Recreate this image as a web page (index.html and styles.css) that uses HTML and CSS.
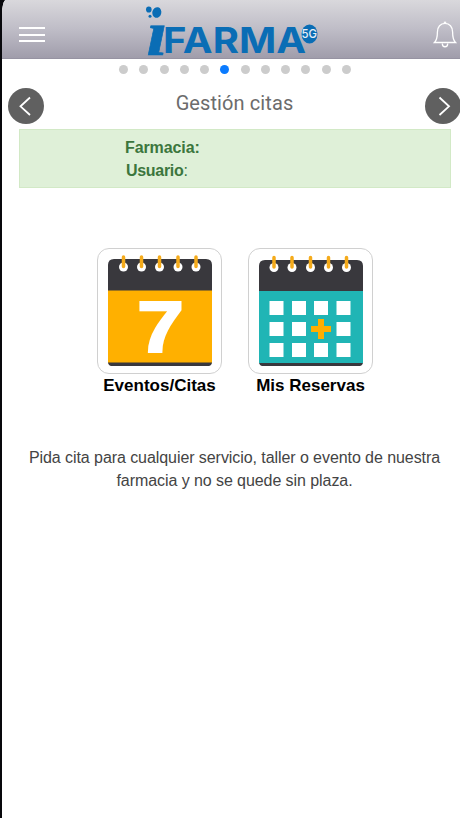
FILE: index.html
```html
<!DOCTYPE html>
<html lang="es">
<head>
    <meta charset="UTF-8">
    <meta name="viewport" content="width=device-width, initial-scale=1.0">
    <title>iFarma - Gestión citas</title>
    <link rel="stylesheet" href="styles.css">
</head>
<body>
    <div class="app">
        <header class="header">
            <button class="menu-btn" aria-label="Menú">
                <span></span>
                <span></span>
                <span></span>
            </button>
            <svg class="logo" width="174" height="59" viewBox="0 0 174 59" role="img" aria-label="iFarma 5G">
                <ellipse cx="2.8" cy="9.5" rx="2.8" ry="3.1"/>
                <ellipse cx="10.8" cy="12.5" rx="4.5" ry="5.4" transform="rotate(15 10.8 12.5)"/>
                <circle cx="4" cy="16.3" r="1.5"/>
                <text class="logo-i" x="0.5" y="55" textLength="21" lengthAdjust="spacingAndGlyphs">ı</text>
                <text class="logo-name" x="17" y="53" textLength="143" lengthAdjust="spacingAndGlyphs">FARMA</text>
                <ellipse cx="163.5" cy="34" rx="8" ry="9.5"/>
                <text class="logo-5g" x="155.5" y="38.3" textLength="15.5" lengthAdjust="spacingAndGlyphs">5G</text>
            </svg>
            <button class="bell-btn" aria-label="Notificaciones">
                <svg width="24" height="28" viewBox="0 0 24 28">
                    <path d="M1.5 21.5H22.5C20 19 19.6 17 19.6 11C19.6 5.8 16.5 2.3 12 2.3S4.4 5.8 4.4 11C4.4 17 4 19 1.5 21.5Z"/>
                    <path d="M9.3 22.5C9.3 26.8 14.7 26.8 14.7 22.5"/>
                    <path d="M10.8 1.3H13.2"/>
                </svg>
            </button>
        </header>

        <div class="dots">
            <span></span>
            <span></span>
            <span></span>
            <span></span>
            <span></span>
            <span class="active"></span>
            <span></span>
            <span></span>
            <span></span>
            <span></span>
            <span></span>
            <span></span>
        </div>

        <div class="title-bar">
            <button class="arrow" aria-label="Anterior">
                <svg width="36" height="36" viewBox="0 0 36 36"><path d="M22 9.5L12.5 18.3L22 27"/></svg>
            </button>
            <h1>Gestión citas</h1>
            <button class="arrow" aria-label="Siguiente">
                <svg width="36" height="36" viewBox="0 0 36 36"><path d="M14.5 9.5L24 18.3L14.5 27"/></svg>
            </button>
        </div>

        <div class="user-info">
            <p class="farmacia"><b>Farmacia:</b></p>
            <p class="usuario"><b>Usuario</b>:</p>
        </div>

        <div class="options">
            <a class="option">
                <div class="card">
                    <svg width="123" height="123" viewBox="0 0 123 123">
                        <path class="dark" d="M10 16q0-6 6-6h92q6 0 6 6v97q0 3-3 4H13q-3-1-3-4z"/>
                        <rect class="yellow" x="10" y="41.5" width="104" height="72"/>
                        <g class="rings">
                            <circle cx="25.5" cy="18" r="4.5"/>
                            <circle cx="43.5" cy="18" r="4.5"/>
                            <circle cx="61.5" cy="18" r="4.5"/>
                            <circle cx="80" cy="18" r="4.5"/>
                            <circle cx="98" cy="18" r="4.5"/>
                            <path d="M25.5 8V17.5M43.5 8V17.5M61.5 8V17.5M80 8V17.5M98 8V17.5"/>
                        </g>
                        <text class="day" x="39" y="103" textLength="47" lengthAdjust="spacingAndGlyphs">7</text>
                    </svg>
                </div>
                <span class="caption">Eventos/Citas</span>
            </a>
            <a class="option">
                <div class="card">
                    <svg width="123" height="123" viewBox="0 0 123 123">
                        <path class="dark" d="M10 17q0-6 6-6h92q6 0 6 6v96q0 3-3 4H13q-3-1-3-4z"/>
                        <rect class="teal" x="10" y="42" width="104" height="72"/>
                        <g class="rings">
                            <circle cx="25" cy="18.5" r="4.5"/>
                            <circle cx="43" cy="18.5" r="4.5"/>
                            <circle cx="61.5" cy="18.5" r="4.5"/>
                            <circle cx="79.5" cy="18.5" r="4.5"/>
                            <circle cx="97.5" cy="18.5" r="4.5"/>
                            <path d="M25 8.5V18M43 8.5V18M61.5 8.5V18M79.5 8.5V18M97.5 8.5V18"/>
                        </g>
                        <path class="white" d="M20.5 52h14v14h-14zM43 52h14v14h-14zM65 52h14v14h-14zM87.5 52h14v14h-14zM20.5 73h14v14h-14zM43 73h14v14h-14zM87.5 73h14v14h-14zM20.5 94h14v14h-14zM43 94h14v14h-14zM65 94h14v14h-14zM87.5 94h14v14h-14z"/>
                        <path class="plus" d="M62 80H82M72 70V90"/>
                    </svg>
                </div>
                <span class="caption">Mis Reservas</span>
            </a>
        </div>

        <p class="description">Pida cita para cualquier servicio, taller o evento de nuestra<br>farmacia y no se quede sin plaza.</p>
    </div>
</body>
</html>
```
FILE: styles.css
```css
* {
    box-sizing: border-box;
}
body {
    margin: 0;
    background-color: #08080c;
    font-family: "Liberation Sans", Arial, sans-serif;
    font-size: 16px;
}
h1, p {
    margin: 0;
}
button {
    padding: 0;
    border: none;
    background: none;
    cursor: pointer;
}
svg {
    display: block;
}
.app {
    min-height: 818px;
    margin-left: 2px;
    border-top-left-radius: 4px 14px;
    background-color: #fff;
    overflow: hidden;
}

/* Header */
.header {
    display: flex;
    align-items: flex-start;
    height: 59px;
    background: linear-gradient(#d9d8dc, #bfbdc7 50%, #a09dab);
    border-bottom: 1px solid #9693a2;
}
.menu-btn {
    display: flex;
    flex-direction: column;
    gap: 4.5px;
    width: 26px;
    margin: 27px 0 0 17px;
}
.menu-btn span {
    height: 2px;
    background-color: #fff;
}
.logo {
    margin-left: 101px;
    fill: #0a6db5;
    overflow: visible;
}
.logo-i {
    font: italic bold 64px "Liberation Serif", serif;
    stroke: #0a6db5;
    stroke-width: 0.6;
}
.logo-name {
    font: 700 35.5px Inter, sans-serif;
}
.logo-5g {
    font: 500 12px Inter, sans-serif;
    fill: #e8eef6;
}
.bell-btn {
    margin: 21px 0 0 113px;
}
.bell-btn svg {
    fill: none;
    stroke: #fff;
    stroke-width: 1.3;
}

/* Slide indicators */
.dots {
    display: flex;
    justify-content: center;
    gap: 11.25px;
    padding: 6px 0 0 8px;
}
.dots span {
    width: 9px;
    height: 9px;
    border-radius: 50%;
    background-color: #ccc;
}
.dots .active {
    background-color: #0a7bff;
}

/* Title and navigation */
.title-bar {
    display: flex;
    justify-content: space-between;
    width: 459px;
    height: 41px;
    margin-top: 14px;
    padding-left: 6px;
}
.title-bar h1 {
    padding-top: 3px;
    font: 400 20px/24px Roboto, sans-serif;
    letter-spacing: 0.1px;
    color: #6c6c6c;
}
.arrow {
    width: 36px;
    height: 36px;
    border-radius: 50%;
    background-color: #606060;
}
.arrow svg {
    fill: none;
    stroke: #fff;
    stroke-width: 1.8;
}

/* Logged user box */
.user-info {
    width: 432px;
    height: 59px;
    margin-left: 17px;
    padding: 6px 0 0 105px;
    border: 1px solid #d2e9c6;
    background-color: #dff0d8;
    color: #3c763d;
    line-height: 23px;
    letter-spacing: -0.1px;
}
.usuario {
    padding-left: 1px;
    letter-spacing: -0.3px;
}

/* Options */
.options {
    display: flex;
    gap: 26px;
    margin: 60px 0 0 95px;
}
.option {
    display: flex;
    flex-direction: column;
    align-items: center;
    width: 125px;
}
.card {
    width: 125px;
    height: 126px;
    border: 1px solid #d0d0d0;
    border-radius: 12px;
}
.caption {
    font-size: 17px;
    font-weight: bold;
    line-height: 23px;
    color: #000;
    white-space: nowrap;
}
.dark {
    fill: #39383d;
}
.yellow {
    fill: #ffb000;
}
.teal {
    fill: #20b5b5;
}
.white,
.rings circle {
    fill: #fff;
}
.rings path {
    stroke: #f5ab1b;
    stroke-width: 3.5;
    stroke-linecap: round;
}
.plus {
    fill: none;
    stroke: #ffae00;
    stroke-width: 6;
}
.day {
    font: bold 73px "Liberation Sans", Arial, sans-serif;
    fill: #fff;
    stroke: #fff;
    stroke-width: 2;
}

.description {
    margin-top: 49px;
    padding-left: 7px;
    line-height: 23px;
    letter-spacing: -0.07px;
    text-align: center;
    white-space: nowrap;
    color: #444;
}
```
